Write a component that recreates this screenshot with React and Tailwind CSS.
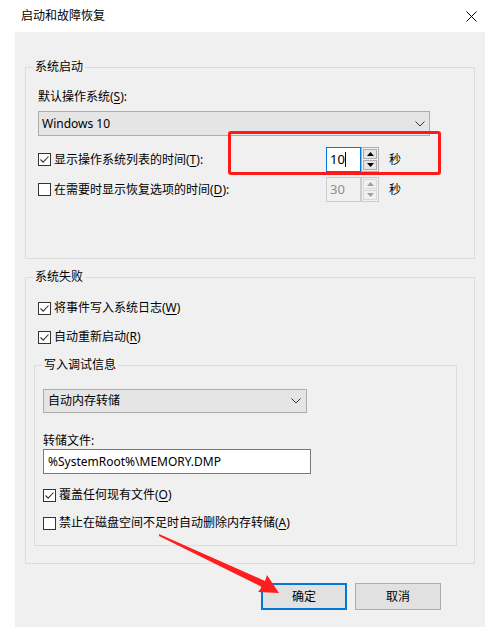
import React from 'react';

const FONT = { fontFamily: "'Noto Sans', 'Noto Sans CJK SC', sans-serif" };

const Check = ({ checked }) => (
  <span className="w-[13px] h-[13px] border border-[#333333] bg-white flex items-center justify-center shrink-0">
    {checked && (
      <svg width="11" height="11" viewBox="0 0 11 11">
        <path d="M1.5 5.5 L4.2 8.2 L9.5 2.5" fill="none" stroke="#333" strokeWidth="1.1" />
      </svg>
    )}
  </span>
);

const CheckRow = ({ checked, children, className = '' }) => (
  <div className={`flex items-center h-[16px] ${className}`}>
    <Check checked={checked} />
    <span className="ml-[3px] text-[12px] leading-[16px] text-black whitespace-nowrap">{children}</span>
  </div>
);

const U = ({ children }) => <span className="underline underline-offset-[2px]">{children}</span>;

const Chevron = () => (
  <svg width="10" height="6" viewBox="0 0 10 6">
    <path d="M0.5 0.5 L5 5 L9.5 0.5" fill="none" stroke="#333" strokeWidth="1" />
  </svg>
);

const Tri = ({ up, color }) => (
  <svg width="7" height="4" viewBox="0 0 7 4">
    <path d={up ? 'M0 4 L3.5 0 L7 4 Z' : 'M0 0 L3.5 4 L7 0 Z'} fill={color} />
  </svg>
);

const Spinner = ({ value, active }) => {
  const edge = active ? 'border-[#0078d7]' : 'border-[#cccccc]';
  const arrow = active ? '#000' : '#a0a0a0';
  return (
    <div className="flex h-[25px]">
      <div
        className={`w-[35px] h-[25px] border ${edge} ${active ? 'bg-white text-black' : 'bg-[#f0f0f0] text-[#8f8f8f]'} flex items-center pl-[3px] text-[13px]`}
      >
        {value}
        {active && <span className="w-px h-[15px] bg-black" />}
      </div>
      <div className={`w-[18px] h-[25px] border ${active ? 'border-[#adadad]' : 'border-[#cccccc]'} flex flex-col p-px gap-px`}>
        <div className={`flex-1 border ${active ? 'border-[#adadad] bg-[#e5e5e5]' : 'border-[#d9d9d9] bg-[#f0f0f0]'} flex items-center justify-center`}>
          <Tri up color={arrow} />
        </div>
        <div className={`flex-1 border ${active ? 'border-[#adadad] bg-[#e5e5e5]' : 'border-[#d9d9d9] bg-[#f0f0f0]'} flex items-center justify-center`}>
          <Tri color={arrow} />
        </div>
      </div>
    </div>
  );
};

const Group = ({ title, className, children }) => (
  <div className={`relative border border-[#dcdcdc] ${className}`}>
    <span className="absolute -top-[9px] left-[7px] px-[2px] bg-[#f0f0f0] text-[12px] leading-[16px] text-black">
      {title}
    </span>
    {children}
  </div>
);

export default function App() {
  return (
    <div className="relative w-[499px] h-[632px] bg-white overflow-hidden text-black" style={FONT}>
      {/* Title bar */}
      <div className="h-[32px] flex items-center justify-between pl-[21px] pr-[22px]">
        <span className="text-[12px] leading-[16px]">启动和故障恢复</span>
        <svg width="11" height="11" viewBox="0 0 11 11">
          <path d="M0.5 0.5 L10.5 10.5 M10.5 0.5 L0.5 10.5" stroke="#000" strokeWidth="1" />
        </svg>
      </div>

      {/* Body */}
      <div className="ml-[15px] w-[470px] h-[595px] bg-[#f0f0f0] pt-[35px] pl-[10px]">
        <Group title="系统启动" className="w-[450px] h-[192px] pt-[21px] pl-[12px]">
          <div className="text-[12px] leading-[16px]">
            默认操作系统(<U>S</U>):
          </div>
          <div className="mt-[6px] w-[392px] h-[25px] bg-[#e5e5e5] border border-[#adadad] flex items-center justify-between pl-[3px] pr-[4px] text-[12px]">
            <span>Windows 10</span>
            <Chevron />
          </div>
          <div className="mt-[11px] flex items-center h-[25px]">
            <div className="w-[288px]">
              <CheckRow checked>
                显示操作系统列表的时间(<U>T</U>):
              </CheckRow>
            </div>
            <Spinner value="10" active />
            <span className="ml-[10px] text-[12px]">秒</span>
          </div>
          <div className="mt-[5px] flex items-center h-[25px]">
            <div className="w-[288px]">
              <CheckRow>
                在需要时显示恢复选项的时间(<U>D</U>):
              </CheckRow>
            </div>
            <Spinner value="30" />
            <span className="ml-[10px] text-[12px]">秒</span>
          </div>
        </Group>

        <Group title="系统失败" className="mt-[18px] w-[450px] h-[287px] pt-[22px] pl-[8px]">
          <CheckRow checked className="ml-[4px]">
            将事件写入系统日志(<U>W</U>)
          </CheckRow>
          <CheckRow checked className="ml-[4px] mt-[13px]">
            自动重新启动(<U>R</U>)
          </CheckRow>

          <Group title="写入调试信息" className="mt-[20px] w-[423px] h-[181px] pt-[23px] pl-[8px]">
            <div className="w-[264px] h-[24px] bg-[#e5e5e5] border border-[#adadad] flex items-center justify-between pl-[4px] pr-[5px] text-[12px]">
              <span>自动内存转储</span>
              <Chevron />
            </div>
            <div className="mt-[20px] text-[12px] leading-[16px]">转储文件:</div>
            <div className="w-[268px] h-[25px] bg-white border border-[#7a7a7a] flex items-center pl-[4px] text-[12px]">
              %SystemRoot%\MEMORY.DMP
            </div>
            <CheckRow checked className="mt-[13px]">
              覆盖任何现有文件(<U>O</U>)
            </CheckRow>
            <CheckRow className="mt-[12px]">
              禁止在磁盘空间不足时自动删除内存转储(<U>A</U>)
            </CheckRow>
          </Group>
        </Group>

        <div className="mt-[19px] flex justify-end gap-[8px] pr-[44px]">
          <button className="w-[86px] h-[27px] bg-[#e1e1e1] border-2 border-[#0078d7] text-[12px]">确定</button>
          <button className="w-[86px] h-[27px] bg-[#e1e1e1] border border-[#adadad] text-[12px]">取消</button>
        </div>
      </div>

      {/* Annotation: red highlight box */}
      <div className="absolute left-[228px] top-[131px] w-[213px] h-[44px] border-[3px] border-[#ff1a1a] rounded-[3px] pointer-events-none" />

      {/* Annotation: red arrow */}
      <svg className="absolute left-0 top-0 pointer-events-none" width="499" height="632" viewBox="0 0 499 632">
        <polygon points="159,534 265,581 267,575 279,593 258,592 262,587 159,536" fill="#ff1e1e" />
      </svg>
    </div>
  );
}
